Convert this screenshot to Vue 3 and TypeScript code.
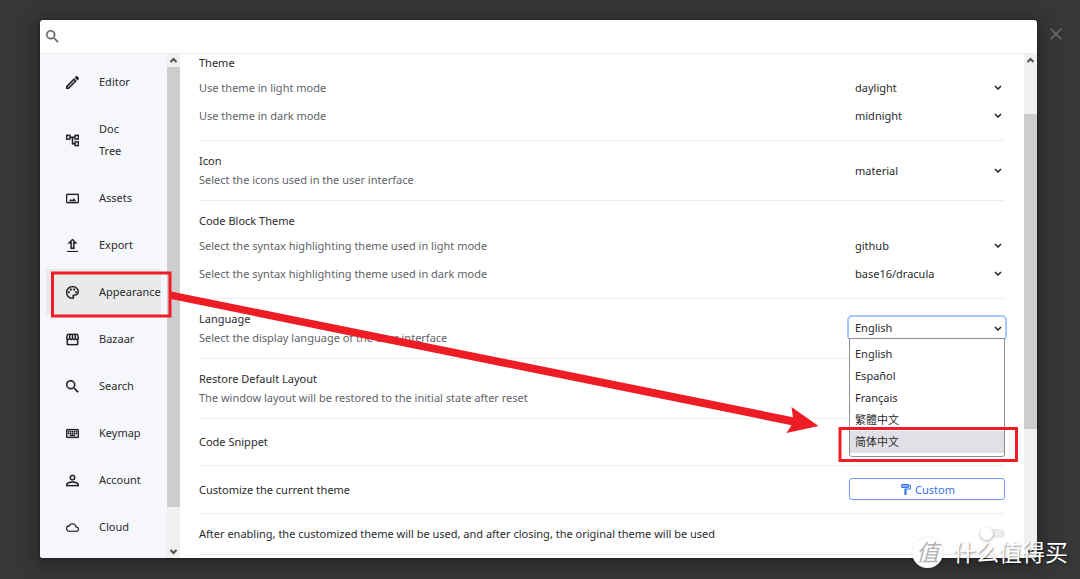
<script setup lang="ts">
import { ref } from 'vue'

interface NavItem {
  label: string
  box: string
  icon: string
}

interface Picker {
  id: string
  label: string
  value: string
}

const search = ref('')
const customEnabled = ref(false)
const active = ref('Appearance')

const searchPath =
  'M15.5 14h-.8l-.3-.3A6.5 6.5 0 1 0 13.700 14.400l.3.3v.8l5 5 1.500-1.500-5-5zm-6 0a4.500 4.500 0 1 1 0-9 4.500 4.500 0 0 1 0 9z'

const navItems: NavItem[] = [
  { label: 'Editor', box: '3 3 18 18', icon: 'M14.060 9.020l.92.92L5.920 19H5v-.92l9.060-9.060M17.660 3c-.25 0-.51.1-.7.29l-1.830 1.830 3.750 3.750 1.830-1.830c.39-.39.39-1.020 0-1.410l-2.340-2.340c-.2-.2-.45-.29-.71-.29zM14.060 6.190L3 17.250V21h3.750L17.810 9.940z' },
  { label: 'Doc Tree', box: '2 2 20 20', icon: 'M22 11V3h-7v3H9V3H2v8h7V8h2v10h4v3h7v-8h-7v3h-2V8h2v3h7zM7 9H4V5h3v4zm10 6h3v4h-3v-4zm0-10h3v4h-3V5z' },
  { label: 'Assets', box: '1 1 22 22', icon: 'M21 4H3c-1.100 0-2 .9-2 2v12c0 1.100.9 2 2 2h18c1.100 0 2-.9 2-2V6c0-1.100-.9-2-2-2zm0 14H3V6h18v12zM6 16.500h12l-3.800-5-3 3.800-2-2.500z' },
  { label: 'Export', box: '2.5 2.5 19 19', icon: 'M4 20h16v2H4v-2zM12 2L5 9h4v8h6V9h4l-7-7zm1 5v8h-2V7H9.830L12 4.830 14.170 7H13z' },
  { label: 'Appearance', box: '2 2 20 20', icon: 'M12 2C6.490 2 2 6.490 2 12s4.490 10 10 10c1.380 0 2.500-1.120 2.500-2.500 0-.61-.23-1.200-.64-1.670-.08-.1-.13-.21-.13-.33 0-.28.22-.5.5-.5H16c3.310 0 6-2.690 6-6 0-4.960-4.490-9-10-9zm4 13h-1.770c-1.380 0-2.500 1.120-2.500 2.500 0 .61.22 1.190.63 1.650.06.07.14.19.14.35 0 .28-.22.5-.5.5-4.410 0-8-3.590-8-8s3.590-8 8-8 8 3.140 8 7c0 2.210-1.790 4-4 4zM6.500 10a1.500 1.500 0 1 0 0 3 1.500 1.500 0 0 0 0-3zm3-4a1.500 1.500 0 1 0 0 3 1.500 1.500 0 0 0 0-3zm5 0a1.500 1.500 0 1 0 0 3 1.500 1.500 0 0 0 0-3zm3 4a1.500 1.500 0 1 0 0 3 1.500 1.500 0 0 0 0-3z' },
  { label: 'Bazaar', box: '2 2 20 20', icon: 'M21.900 8.890l-1.050-4.370c-.22-.9-1-1.520-1.910-1.520H5.050c-.9 0-1.690.63-1.900 1.520L2.100 8.890c-.24 1.020-.02 2.060.62 2.880.08.11.19.19.28.29V19c0 1.100.9 2 2 2h14c1.100 0 2-.9 2-2v-6.940c.09-.09.2-.18.28-.28.64-.82.87-1.870.62-2.890zm-2.990-3.900l1.050 4.370c.1.42.01.84-.25 1.170-.14.18-.44.47-.94.47-.61 0-1.140-.49-1.210-1.140L16.980 5l1.930-.01zM13 5h1.960l.54 4.520c.05.39-.07.78-.33 1.070-.22.26-.54.41-.95.41-.67 0-1.220-.59-1.220-1.310V5zM8.490 9.520L9.040 5H11v4.690c0 .72-.55 1.310-1.290 1.310-.34 0-.65-.15-.89-.41-.25-.29-.37-.68-.33-1.070zm-4.450-.16L5.050 5h1.970l-.58 4.860c-.08.65-.6 1.140-1.210 1.140-.49 0-.8-.29-.93-.47-.27-.32-.36-.75-.26-1.170zM5 19v-6.030c.08.01.15.03.23.03.87 0 1.660-.36 2.240-.95.6.6 1.400.95 2.310.95.87 0 1.650-.36 2.230-.93.59.57 1.390.93 2.290.93.84 0 1.640-.35 2.240-.95.58.59 1.370.95 2.240.95.08 0 .15-.02.23-.03V19H5z' },
  { label: 'Search', box: '3 3 18 18', icon: searchPath },
  { label: 'Keymap', box: '2 2 20 20', icon: 'M20 5H4c-1.100 0-2 .9-2 2v10c0 1.100.9 2 2 2h16c1.100 0 2-.9 2-2V7c0-1.100-.9-2-2-2zm0 12H4V7h16v10zm-9-9h2v2h-2zm0 3h2v2h-2zM8 8h2v2H8zm0 3h2v2H8zm-3 0h2v2H5zm0-3h2v2H5zm3 6h8v2H8zm6-3h2v2h-2zm0-3h2v2h-2zm3 3h2v2h-2zm0-3h2v2h-2z' },
  { label: 'Account', box: '2 2 20 20', icon: 'M12 5a2.500 2.500 0 1 1 0 5 2.500 2.500 0 0 1 0-5m0-2a4.500 4.500 0 1 0 0 9 4.500 4.500 0 0 0 0-9zm0 12.500c3.500 0 7.500 1.500 7.800 3V19H4.200v-.5c.3-1.500 4.300-3 7.800-3m0-2.200c-3.500 0-10 1.700-10 5.200V21h20v-2.500c0-3.500-6.500-5.200-10-5.200z' },
  { label: 'Cloud', box: '0 0 24 24', icon: 'M19.350 10.040C18.670 6.590 15.640 4 12 4 9.110 4 6.600 5.640 5.350 8.040 2.340 8.360 0 10.910 0 14c0 3.310 2.690 6 6 6h13c2.760 0 5-2.240 5-5 0-2.640-2.050-4.780-4.650-4.960zM19 18H6c-2.210 0-4-1.790-4-4s1.790-4 4-4h.71C7.370 7.690 9.480 6 12 6c3.040 0 5.500 2.460 5.500 5.500v.5H19c1.660 0 3 1.340 3 3s-1.340 3-3 3z' },
]

const themePickers: Picker[] = [
  { id: 'theme-light', label: 'Use theme in light mode', value: 'daylight' },
  { id: 'theme-dark', label: 'Use theme in dark mode', value: 'midnight' },
]

const codePickers: Picker[] = [
  { id: 'code-light', label: 'Select the syntax highlighting theme used in light mode', value: 'github' },
  { id: 'code-dark', label: 'Select the syntax highlighting theme used in dark mode', value: 'base16/dracula' },
]

const languages = ['English', 'Español', 'Français', '繁體中文', '简体中文']
const language = ref('English')
const hovered = ref('简体中文')
</script>

<template>
  <div class="screen">
    <div class="dialog" role="dialog" aria-label="Settings">
      <header class="searchbar">
        <svg class="search-icon" viewBox="0 0 24 24"><path :d="searchPath" /></svg>
        <input v-model="search" type="text" aria-label="Search settings" />
      </header>

      <div class="body">
        <nav class="nav">
          <button
            v-for="item in navItems"
            :key="item.label"
            type="button"
            class="nav-item"
            :class="{ active: item.label === active }"
            @click="active = item.label"
          >
            <svg :viewBox="item.box"><path :d="item.icon" /></svg>
            <span>{{ item.label }}</span>
          </button>
        </nav>
        <div class="scrollbar nav-scroll">
          <svg viewBox="0 0 13 13"><path d="M3.500 8l3-3 3 3" /></svg>
          <div class="track"><div class="thumb"></div></div>
          <svg viewBox="0 0 13 13"><path d="M3.500 5l3 3 3-3" /></svg>
        </div>

        <main class="content">
          <section class="group">
            <h2>Theme</h2>
            <div v-for="p in themePickers" :key="p.id" class="line">
              <label :for="p.id">{{ p.label }}</label>
              <div class="picker">
                <select :id="p.id"><option>{{ p.value }}</option></select>
                <svg viewBox="0 0 8 5"><path d="M1 1l3 3 3-3" /></svg>
              </div>
            </div>
          </section>

          <section class="pair">
            <div>
              <h2>Icon</h2>
              <label for="icons">Select the icons used in the user interface</label>
            </div>
            <div class="picker">
              <select id="icons"><option>material</option></select>
              <svg viewBox="0 0 8 5"><path d="M1 1l3 3 3-3" /></svg>
            </div>
          </section>

          <section class="group">
            <h2>Code Block Theme</h2>
            <div v-for="p in codePickers" :key="p.id" class="line">
              <label :for="p.id">{{ p.label }}</label>
              <div class="picker">
                <select :id="p.id"><option>{{ p.value }}</option></select>
                <svg viewBox="0 0 8 5"><path d="M1 1l3 3 3-3" /></svg>
              </div>
            </div>
          </section>

          <section class="pair">
            <div>
              <h2>Language</h2>
              <label for="language">Select the display language of the user interface</label>
            </div>
            <div class="picker open">
              <select id="language" v-model="language">
                <option v-for="l in languages" :key="l">{{ l }}</option>
              </select>
              <svg viewBox="0 0 8 5"><path d="M1 1l3 3 3-3" /></svg>
              <ul class="menu" role="listbox" aria-label="Language">
                <li
                  v-for="l in languages"
                  :key="l"
                  role="option"
                  :class="{ hovered: l === hovered }"
                  @mouseenter="hovered = l"
                  @click="language = l"
                >{{ l }}</li>
              </ul>
            </div>
          </section>

          <section class="pair">
            <div>
              <h2>Restore Default Layout</h2>
              <p>The window layout will be restored to the initial state after reset</p>
            </div>
          </section>

          <section class="single">
            <h2>Code Snippet</h2>
          </section>

          <section class="single tall">
            <h2>Customize the current theme</h2>
            <button type="button" class="custom">
              <svg viewBox="0 0 24 24">
                <path class="tint" d="M5 3h13v5H5z" />
                <path d="M18 4V3c0-.55-.45-1-1-1H5c-.55 0-1 .45-1 1v5c0 .55.45 1 1 1h12c.55 0 1-.45 1-1V6h2v4H10v11c0 .55.45 1 1 1h2c.55 0 1-.45 1-1v-9h8V4h-4zm-2 3H6V4h10v3z" />
              </svg>
              <span>Custom</span>
            </button>
          </section>

          <section class="single short">
            <label class="strong" for="use-custom">After enabling, the customized theme will be used, and after closing, the original theme will be used</label>
            <input id="use-custom" v-model="customEnabled" class="switch" type="checkbox" />
          </section>
        </main>
        <div class="scrollbar main-scroll">
          <svg viewBox="0 0 13 13"><path d="M3.500 8l3-3 3 3" /></svg>
          <div class="track"><div class="thumb"></div></div>
          <svg viewBox="0 0 13 13"><path d="M3.500 5l3 3 3-3" /></svg>
        </div>
      </div>
    </div>

    <button type="button" class="close" aria-label="Close">
      <svg viewBox="0 0 12 12"><path d="M.7.7l10.600 10.600M11.300.7L.7 11.300" /></svg>
    </button>

    <svg class="marks" width="1080" height="579" viewBox="0 0 1080 579" aria-hidden="true">
      <rect x="52.500" y="273" width="117.500" height="43" />
      <rect x="840" y="428.500" width="176.500" height="32" />
      <path d="M171 291.500L793 417.200 791.500 407 818.500 426 786.500 433 791.500 425.200 171 299z" />
    </svg>

    <div class="watermark">
      <span class="seal">值</span>
      <span class="brand">什么值得买</span>
    </div>
  </div>
</template>

<style>
body {
  margin: 0;
  background: #373737;
}
</style>

<style scoped>
.screen {
  position: relative;
  box-sizing: border-box;
  display: flex;
  height: 100vh;
  padding: 20px 0 21px 40px;
  overflow: hidden;
  background: #373737;
  color: #2a2b2d;
  font: 11px/19px "Noto Sans", "Noto Sans CJK SC", sans-serif;
}
button,
input,
select {
  font: inherit;
  color: inherit;
}
h2,
p,
ul {
  margin: 0;
  padding: 0;
  font-size: 11px;
  font-weight: 400;
}
.dialog {
  flex: 1;
  min-width: 0;
  display: flex;
  flex-direction: column;
  overflow: hidden;
  border-radius: 3px;
  background: #fff;
  box-shadow: 0 4px 20px 4px rgba(0, 0, 0, 0.32), 0 0 2px rgba(0, 0, 0, 0.6);
}
.searchbar {
  display: flex;
  align-items: center;
  height: 33px;
  padding: 0 4px;
  border-bottom: 1px solid #eee;
}
.search-icon {
  width: 17px;
  height: 17px;
  fill: #5f6368;
  stroke: #5f6368;
  stroke-width: 0.4;
}
.searchbar input {
  flex: 1;
  border: 0;
  outline: 0;
  background: none;
}
.body {
  flex: 1;
  min-height: 0;
  display: flex;
}
.nav {
  box-sizing: border-box;
  width: 127px;
  padding: 5px 6px 0;
  display: flex;
  flex-direction: column;
  gap: 1px;
  overflow: hidden;
  background: #f6f7fa;
}
.nav-item {
  flex: none;
  display: flex;
  align-items: center;
  gap: 20px;
  width: 100%;
  padding: 12px 20px;
  border: 0;
  border-radius: 3px;
  background: none;
  text-align: left;
  line-height: 22px;
}
.nav-item svg {
  flex: none;
  width: 13px;
  height: 13px;
  fill: #202124;
  stroke: #202124;
  stroke-width: 0.3;
}
.nav-item span {
  flex: 1;
  min-width: 0;
}
.nav-item.active {
  background: #e9eaea;
}
.scrollbar {
  flex: none;
  display: flex;
  flex-direction: column;
  width: 13px;
  background: #f0f0f0;
}
.scrollbar svg {
  width: 13px;
  height: 13px;
  fill: none;
  stroke: #505050;
  stroke-width: 2;
}
.track {
  box-sizing: border-box;
  flex: 1;
}
.thumb {
  background: #cdcdcd;
}
.nav-scroll .thumb {
  height: 92%;
}
.main-scroll .track {
  padding-top: 47px;
}
.main-scroll .thumb {
  height: 73%;
}
.content {
  flex: 1;
  min-width: 0;
  padding: 0 19px;
  overflow: hidden;
}
.content > section:first-child {
  margin-top: -11px;
}
section {
  border-bottom: 1px solid #eee;
}
label,
p {
  color: #5f6368;
}
.group {
  padding: 10px 0 11px;
}
.group h2 {
  margin-bottom: 1px;
}
.line {
  display: flex;
  align-items: center;
  justify-content: space-between;
  height: 28px;
}
.pair {
  display: flex;
  align-items: center;
  justify-content: space-between;
  padding: 10px 0 11px;
}
.pair label {
  display: block;
}
.single {
  box-sizing: border-box;
  display: flex;
  align-items: center;
  justify-content: space-between;
  height: 47px;
  padding-bottom: 1px;
}
.single.tall {
  height: 48px;
}
.single.short {
  height: 41px;
}
.strong {
  color: #2a2b2d;
}
.picker {
  position: relative;
  display: flex;
  align-items: center;
  width: 156px;
}
.picker select {
  box-sizing: border-box;
  width: 100%;
  height: 22px;
  padding: 0 20px 0 6px;
  border: 0;
  border-radius: 3px;
  outline: 0;
  appearance: none;
  background: #fff;
}
.picker > svg {
  position: absolute;
  right: 3px;
  width: 8px;
  height: 5px;
  fill: none;
  stroke: #222;
  stroke-width: 1.500;
  pointer-events: none;
}
.open select {
  padding-bottom: 2px;
  box-shadow: 0 0 0 2px #a9c6fd;
}
.menu {
  position: absolute;
  top: 21px;
  left: 0;
  right: 0;
  padding: 4px 0 3px;
  border: 1px solid #8f8f8f;
  border-radius: 0 0 3px 3px;
  background: #fff;
  list-style: none;
}
.menu li {
  padding: 0 5px;
  line-height: 22px;
}
.menu li.hovered {
  background: #e0e0e6;
}
.custom {
  box-sizing: border-box;
  display: flex;
  align-items: center;
  justify-content: center;
  gap: 3px;
  width: 156px;
  height: 22px;
  padding: 0;
  border: 1px solid #6c9cf8;
  border-radius: 3px;
  background: #fff;
  color: #3575f0;
}
.custom svg {
  width: 13px;
  height: 13px;
  fill: #3575f0;
}
.custom .tint {
  fill: #a9c6fd;
}
.switch {
  appearance: none;
  display: flex;
  align-items: center;
  width: 22px;
  height: 9px;
  margin: 0;
  border-radius: 5px;
  background: #ececec;
}
.switch::before {
  content: "";
  flex: none;
  width: 13px;
  height: 13px;
  margin-left: -3px;
  border-radius: 50%;
  background: #fff;
  box-shadow: 0 1px 3px rgba(0, 0, 0, 0.35);
}
.switch:checked::before {
  margin-left: 12px;
}
.close {
  flex: none;
  align-self: flex-start;
  display: flex;
  justify-content: center;
  width: 43px;
  padding: 8px 5px 8px 0;
  border: 0;
  background: none;
}
.close svg {
  width: 12px;
  height: 12px;
  fill: none;
  stroke: #6b6f75;
  stroke-width: 1.500;
}
.marks {
  position: absolute;
  top: 0;
  left: 0;
  pointer-events: none;
}
.marks rect {
  fill: none;
  stroke: #ee1c24;
  stroke-width: 3;
}
.marks path {
  fill: #ee1c24;
}
.watermark {
  position: absolute;
  right: 12px;
  bottom: 11px;
  display: flex;
  align-items: center;
  gap: 10px;
  color: #fff;
  font: 23px/28px "Noto Sans CJK SC", sans-serif;
  text-shadow: 1px 1px 2px rgba(0, 0, 0, 0.45);
  pointer-events: none;
}
.brand {
  padding-bottom: 3px;
}
.seal {
  width: 31px;
  height: 31px;
  border-radius: 50%;
  background: #fff;
  color: #b4b4b4;
  line-height: 28px;
  text-align: center;
  text-shadow: none;
  font-style: italic;
  box-shadow: 0 0 2px rgba(0, 0, 0, 0.15);
}
</style>
